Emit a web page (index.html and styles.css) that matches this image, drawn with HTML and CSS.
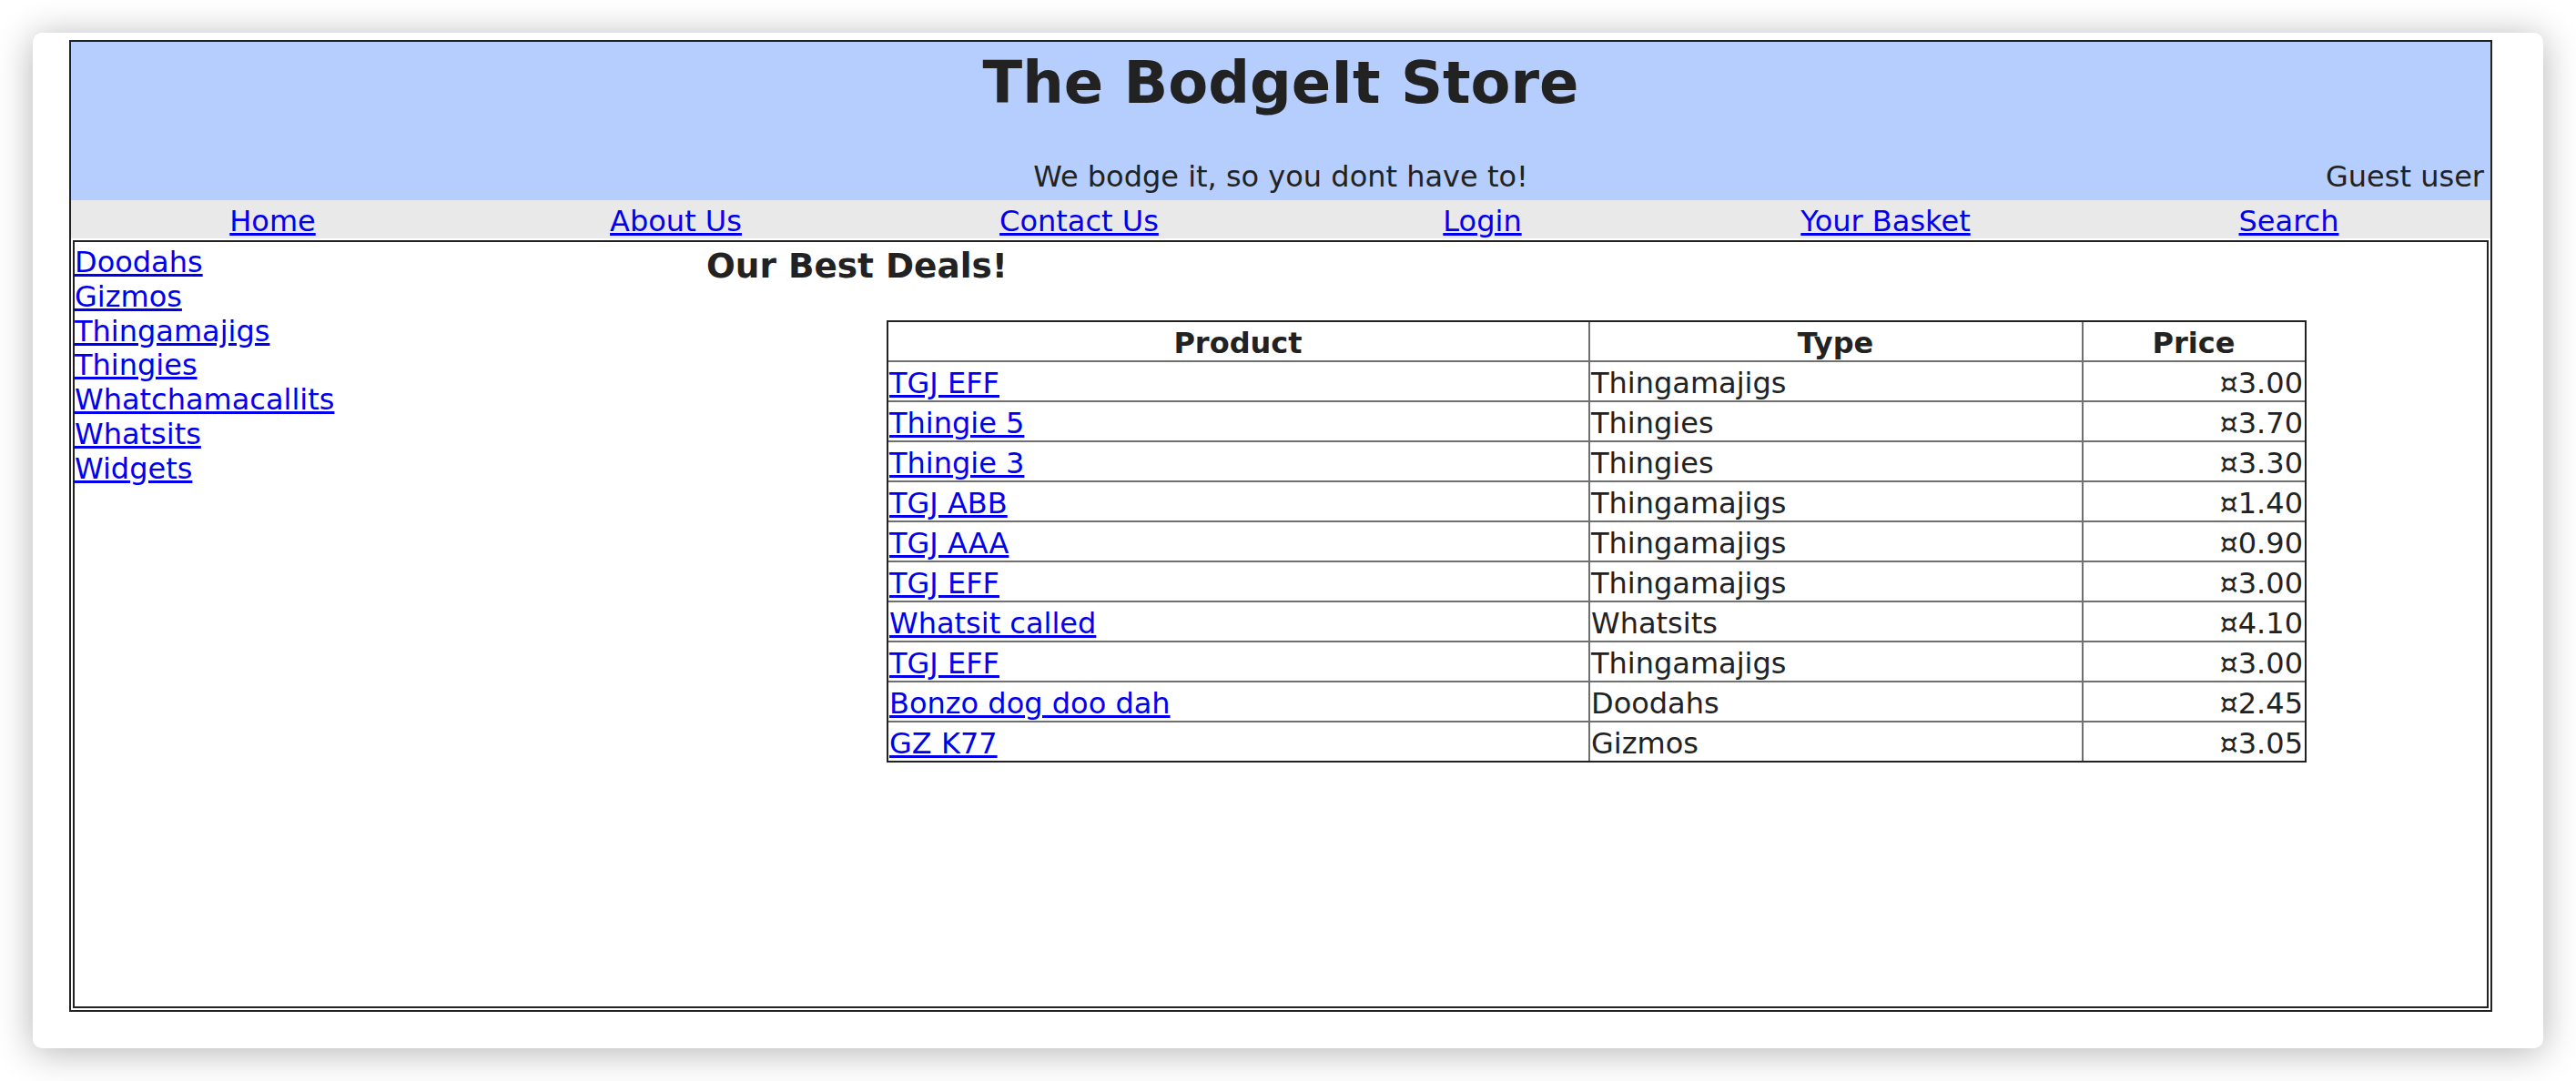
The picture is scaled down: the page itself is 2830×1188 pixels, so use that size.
FILE: index.html
```html
<!DOCTYPE html>
<html>
<head>
<meta charset="utf-8">
<title>The BodgeIt Store</title>
<link rel="stylesheet" href="styles.css">
</head>
<body>
<div class="window">
  <div class="store">
    <header class="masthead">
      <h1 class="title">The BodgeIt Store</h1>
      <div class="tagline-row">
        <span class="spacer"></span>
        <span class="tagline">We bodge it, so you dont have to!</span>
        <span class="user">Guest user</span>
      </div>
    </header>
    <nav class="nav">
      <a href="#">Home</a>
      <a href="#">About Us</a>
      <a href="#">Contact Us</a>
      <a href="#">Login</a>
      <a href="#">Your Basket</a>
      <a href="#">Search</a>
    </nav>
    <div class="content-wrap">
      <div class="content">
        <ul class="menu">
          <li><a href="#">Doodahs</a></li>
          <li><a href="#">Gizmos</a></li>
          <li><a href="#">Thingamajigs</a></li>
          <li><a href="#">Thingies</a></li>
          <li><a href="#">Whatchamacallits</a></li>
          <li><a href="#">Whatsits</a></li>
          <li><a href="#">Widgets</a></li>
        </ul>
        <main class="deals">
          <h3 class="deals-title">Our Best Deals!</h3>
          <table class="products">
            <thead>
              <tr><th class="c-product">Product</th><th class="c-type">Type</th><th class="c-price">Price</th></tr>
            </thead>
            <tbody>
              <tr><td><a href="#">TGJ EFF</a></td><td>Thingamajigs</td><td class="price">¤3.00</td></tr>
              <tr><td><a href="#">Thingie 5</a></td><td>Thingies</td><td class="price">¤3.70</td></tr>
              <tr><td><a href="#">Thingie 3</a></td><td>Thingies</td><td class="price">¤3.30</td></tr>
              <tr><td><a href="#">TGJ ABB</a></td><td>Thingamajigs</td><td class="price">¤1.40</td></tr>
              <tr><td><a href="#">TGJ AAA</a></td><td>Thingamajigs</td><td class="price">¤0.90</td></tr>
              <tr><td><a href="#">TGJ EFF</a></td><td>Thingamajigs</td><td class="price">¤3.00</td></tr>
              <tr><td><a href="#">Whatsit called</a></td><td>Whatsits</td><td class="price">¤4.10</td></tr>
              <tr><td><a href="#">TGJ EFF</a></td><td>Thingamajigs</td><td class="price">¤3.00</td></tr>
              <tr><td><a href="#">Bonzo dog doo dah</a></td><td>Doodahs</td><td class="price">¤2.45</td></tr>
              <tr><td><a href="#">GZ K77</a></td><td>Gizmos</td><td class="price">¤3.05</td></tr>
            </tbody>
          </table>
        </main>
      </div>
    </div>
  </div>
</div>
</body>
</html>
```
FILE: styles.css
```css
html, body {
  margin: 0;
  padding: 0;
  background: #ffffff;
}

body {
  font-family: "DejaVu Sans", Verdana, sans-serif;
  color: #222222;
  font-size: 32px;
}

a {
  color: #0000ee;
  text-decoration: underline;
}

.window {
  margin: 36px;
  width: 2758px;
  height: 1116px;
  box-sizing: border-box;
  padding: 8px 56px 40px 40px;
  background: #ffffff;
  border-radius: 10px;
  box-shadow: 0 4px 40px rgba(0, 0, 0, 0.3);
}

.store {
  border: 2px solid #222222;
  height: 1068px;
  box-sizing: border-box;
  display: flex;
  flex-direction: column;
}

.masthead {
  background: #b6cefd;
  padding: 8px 0 7px;
  text-align: center;
}

.title {
  margin: 0 0 47px;
  font-size: 64px;
  line-height: 74px;
  font-weight: bold;
}

.tagline-row {
  display: grid;
  grid-template-columns: 3fr 4fr 3fr;
  font-size: 32px;
  line-height: 38px;
}

.user {
  text-align: right;
  padding-right: 7px;
}

.nav {
  background: #e9e9e9;
  display: grid;
  grid-template-columns: repeat(6, 1fr);
  height: 42px;
  box-sizing: border-box;
  padding-top: 4px;
  font-size: 32px;
  line-height: 38px;
  text-align: center;
}

.nav a {
  justify-self: center;
}

.content-wrap {
  padding: 2px;
}

.content {
  border: 2px solid #222222;
  height: 844px;
  box-sizing: border-box;
  padding-top: 4px;
  display: grid;
  grid-template-columns: 692px 1fr;
  align-items: start;
}

.menu {
  list-style: none;
  margin: 0;
  padding: 0;
  font-size: 32px;
  line-height: 37.8px;
}

.deals {
  padding-left: 2px;
}

.deals-title {
  margin: 0 0 38px;
  font-size: 37.44px;
  line-height: 44px;
  font-weight: bold;
}

.products {
  width: 1560px;
  margin: 0 auto;
  border-collapse: separate;
  border-spacing: 0;
  border: 2px solid #222222;
  table-layout: fixed;
  font-size: 32px;
  line-height: 38px;
}

.products th,
.products td {
  box-sizing: border-box;
  padding: 4px 2px 0 1px;
  vertical-align: top;
}

.products th {
  font-weight: bold;
  text-align: center;
}

.products td {
  border-top: 2px solid #707070;
  text-align: left;
}

.products th + th,
.products td + td {
  border-left: 2px solid #707070;
}

.products .c-product { width: 769px; }
.products .c-type { width: 542px; }
.products .c-price { width: 245px; }

.products td.price {
  text-align: right;
}
```
